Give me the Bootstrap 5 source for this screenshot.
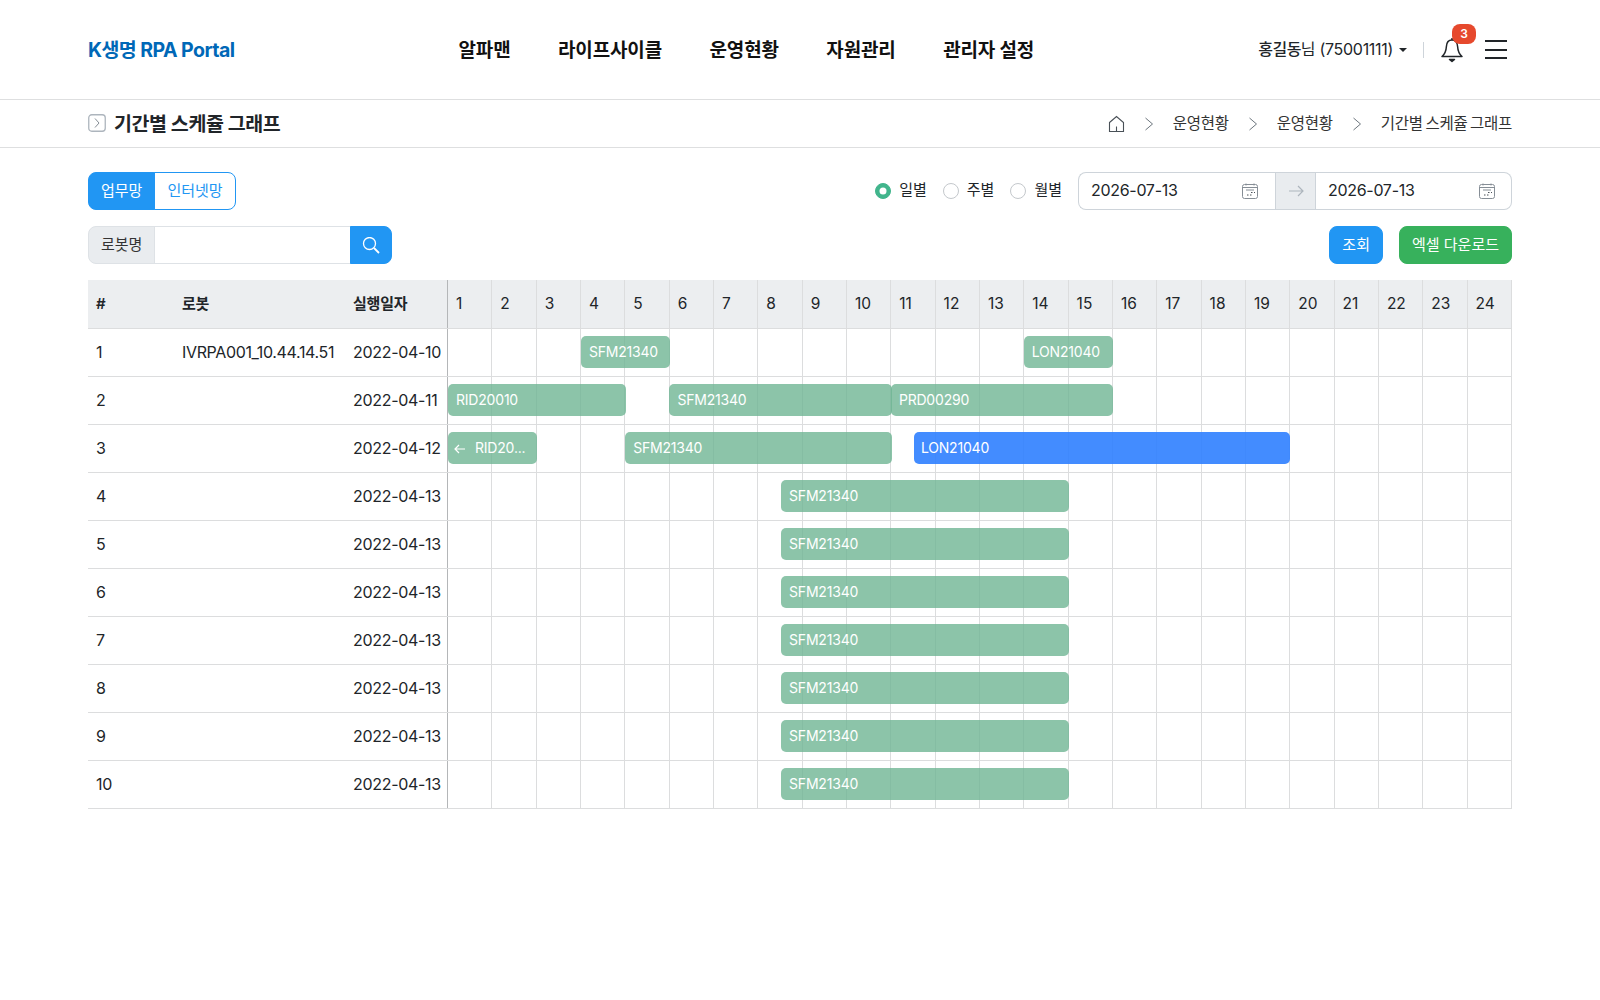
<!DOCTYPE html>
<html lang="ko">
<head>
  <meta charset="UTF-8" />
  <meta name="viewport" content="width=device-width, initial-scale=1.0"/>
  <title>기간별 스케쥴 그래프</title>
  <link href="https://cdn.jsdelivr.net/npm/bootstrap@5.3.2/dist/css/bootstrap.min.css" rel="stylesheet" />
  <style>
    body {
      font-family: Inter, "Noto Sans CJK KR", sans-serif;
      font-size: 15px;
      color: #212529;
      background: #fff;
    }
    .wrap { padding: 0 88px; }
    .top-bar { height: 100px; border-bottom: 1px solid #dedfe0; }
    .brand-name { color: #0068b7; font-size: 19.5px; font-weight: 700; letter-spacing: -.55px; margin-top: 3px; }
    .main-menu { gap: 47.5px; margin-top: 3px; }
    .main-menu a { color: #111; font-size: 19px; font-weight: 700; letter-spacing: -.15px; text-decoration: none; }
    .user-name { font-size: 16px; letter-spacing: -.3px; margin-top: -1px; }
    .user-name b { font-weight: 500; letter-spacing: -.5px; }
    .user-name::after { content: ""; display: inline-block; margin-left: 6px; vertical-align: 3px; border-top: 4px solid #212529; border-left: 4px solid transparent; border-right: 4px solid transparent; }
    .bar-sep { width: 1px; height: 16px; background: #ced4da; margin: 0 16px; }
    .bell-box { width: 24px; height: 26px; position: relative; margin-right: 21px; }
    .bell-count { position: absolute; left: 12px; top: -13px; width: 24px; height: 20px; border-radius: 8px; background: #e6492d; color: #fff; font-size: 12px; font-weight: 600; text-align: center; line-height: 20px; }
    .burger { width: 22px; height: 19px; margin-right: 5px; display: flex; flex-direction: column; justify-content: space-between; }
    .burger span { height: 2px; background: #212529; }
    .sub-bar { height: 48px; border-bottom: 1px solid #dedfe0; }
    .page-title { font-size: 19.5px; font-weight: 700; letter-spacing: -.4px; margin: 2px 0 0; color: #212529; }
    .crumb-line { font-size: 15.5px; letter-spacing: -.26px; word-spacing: -1.5px; color: #333; gap: 19px; }
    .tool-row { margin-top: 24px; }
    .tool-row + .tool-row { margin-top: 16px; }
    .btn-blue { background: #2196f3; border-color: #2196f3; color: #fff; }
    .btn-green { background: #37b15c; border-color: #37b15c; color: #fff; }
    .tool-row .btn, .tool-row .form-control, .tool-row .input-group-text {
      font-size: 15px; height: 38px; border-radius: 8px;
    }
    .tab-pick .btn { padding: 0 12px; border-color: #2196f3; color: #2196f3; background: #fff; line-height: 36px; }
    .tab-pick .btn.active { background: #2196f3; color: #fff; }
    .name-search { width: 304px; }
    .name-search .input-group-text { background: #e9ecef; color: #333; padding: 0 12px; letter-spacing: -.1px; }
    .name-search .btn { width: 42px; padding: 0; }
    .period-pick { gap: 16px; margin-right: 16px; }
    .period-pick .form-check { margin: 0; padding: 0; display: flex; align-items: center; gap: 8px; min-height: 0; }
    .period-pick .form-check-input { float: none; margin: 0; width: 16px; height: 16px; border-color: #c4c8cc; }
    .period-pick .form-check-input:checked { background-color: #41b58c; border-color: #41b58c; }
    .period-pick label { margin-top: -2px; }
    .range-pick { width: 434px; }
    .range-pick .date-cell { flex: 1; height: 38px; border: 1px solid #ced4da; padding: 0 17px 0 12px; display: flex; align-items: center; justify-content: space-between; font-size: 16px; letter-spacing: -.3px; }
    .range-pick .date-cell span { margin-top: -2px; }
    .range-pick .date-cell:first-child { border-radius: 8px 0 0 8px; border-right: 0; }
    .range-pick .date-cell:last-child { border-radius: 0 8px 8px 0; border-left: 0; padding-right: 16px; }
    .range-pick .arrow-cell { width: 41px; height: 38px; background: #e9ecef; border: 1px solid #ced4da; display: flex; align-items: center; justify-content: center; }
    .act-btn { padding: 0 12px; }
    .sched { margin: 16px 0 0; table-layout: fixed; width: 100%; font-size: 16px; border-color: #dcddde; }
    .sched th, .sched td { height: 48px; padding: 0 8px; vertical-align: middle; box-shadow: none; white-space: nowrap; letter-spacing: -.3px; }
    .sched thead th { background: #eceef0; }
    .sched .head-label { font-weight: 600; font-size: 15px; letter-spacing: -.2px; }
    .sched .hour { font-weight: 400; font-size: 15.5px; letter-spacing: 0; border-left: 1px solid #dcddde; padding: 0 0 0 8px; }
    .sched .hour-first { border-left: 1px solid #b4b6b8; }
    .sched .hour:last-child { border-right: 1px solid #dcddde; }
    .sched .robot-cell { letter-spacing: -.35px; }
    .sched .time-cell { padding: 0; border-left: 1px solid #b4b6b8; border-right: 1px solid #dcddde; }
    .time-row { display: flex; height: 47px; position: relative; }
    .time-row i { flex: 1; border-left: 1px solid #dcddde; }
    .time-row i:first-child { border-left: 0; }
    .job-bar { position: absolute; top: 7px; height: 32px; border-radius: 5px; color: #fff; font-size: 14px; letter-spacing: -.2px; padding-left: 8px; line-height: 32px; background: rgba(111, 181, 147, .8); overflow: hidden; }
    .job-bar.is-running { background: rgba(47, 127, 255, .9); padding-left: 7px; }
    .job-bar.is-back { padding-left: 6px; }
    .job-bar svg { margin-right: 9px; vertical-align: -1px; }
  </style>
</head>
<body>
  <header class="top-bar wrap d-flex align-items-center justify-content-between">
    <a class="brand-name text-decoration-none" href="#">K생명 RPA Portal</a>
    <nav class="main-menu d-flex">
      <a href="#">알파맨</a>
      <a href="#">라이프사이클</a>
      <a href="#">운영현황</a>
      <a href="#">자원관리</a>
      <a href="#">관리자 설정</a>
    </nav>
    <div class="d-flex align-items-center">
      <span class="user-name"><b>홍길동</b>님 (75001111)</span>
      <span class="bar-sep"></span>
      <span class="bell-box">
        <svg width="24" height="26" viewBox="0 0 24 26" fill="none" stroke="#212529" stroke-width="1.5" stroke-linejoin="round"><path d="M12 3c-3.600 0-5.400 2.600-5.600 6.500-.3 5-1.800 7.800-4.400 10h20c-2.600-2.200-4.100-5-4.400-10C17.400 5.600 15.600 3 12 3z"/><path d="M12 1v2"/><path d="M9.500 22.500h5l-2.500 2z" fill="#212529"/></svg>
        <span class="bell-count">3</span>
      </span>
      <span class="burger"><span></span><span></span><span></span></span>
    </div>
  </header>

  <div class="sub-bar wrap d-flex align-items-center justify-content-between">
    <div class="d-flex align-items-center gap-2">
      <svg width="18" height="18" viewBox="0 0 18 18" fill="none"><rect x=".75" y=".75" width="16.500" height="16.500" rx="3" stroke="#adb5bd" stroke-width="1.300"/><path d="M7 4.500 11 9l-4 4.500" stroke="#868e96" stroke-width="1"/></svg>
      <h1 class="page-title">기간별 스케쥴 그래프</h1>
    </div>
    <div class="crumb-line d-flex align-items-center">
      <svg width="17" height="18" viewBox="0 0 17 18" fill="none" stroke="#495057" stroke-width="1.100"><path d="M1.500 7.500 8.500 1.500l7 6V16.500h-14z"/><path d="M8.500 11.500v5"/></svg>
      <svg width="10" height="14" viewBox="0 0 10 14" fill="none" stroke="#6c757d"><path d="M1.500 1l7 6-7 6"/></svg>
      <span>운영현황</span>
      <svg width="10" height="14" viewBox="0 0 10 14" fill="none" stroke="#6c757d"><path d="M1.500 1l7 6-7 6"/></svg>
      <span>운영현황</span>
      <svg width="10" height="14" viewBox="0 0 10 14" fill="none" stroke="#6c757d"><path d="M1.500 1l7 6-7 6"/></svg>
      <span>기간별 스케쥴 그래프</span>
    </div>
  </div>

  <main class="wrap">
    <div class="tool-row d-flex align-items-center justify-content-between">
      <div class="btn-group tab-pick" role="group">
        <button type="button" class="btn active">업무망</button>
        <button type="button" class="btn">인터넷망</button>
      </div>
      <div class="d-flex align-items-center">
        <div class="period-pick d-flex align-items-center">
          <div class="form-check"><input class="form-check-input" type="radio" name="period" id="pd" checked><label for="pd">일별</label></div>
          <div class="form-check"><input class="form-check-input" type="radio" name="period" id="pw"><label for="pw">주별</label></div>
          <div class="form-check"><input class="form-check-input" type="radio" name="period" id="pm"><label for="pm">월별</label></div>
        </div>
        <div class="range-pick d-flex">
          <div class="date-cell"><span>2026-07-13</span>
            <svg width="16" height="16" viewBox="0 0 16 16" fill="none" stroke="#868e96"><rect x=".5" y="1.500" width="15" height="14" rx="2"/><path d="M1 4.500h14M4 .5v2M12 .5v2M4 7h8" /><path d="M9 9.500h1.500M12 9.500h1M5 12h1.500M8 12h1.500" stroke="#495057"/></svg>
          </div>
          <div class="arrow-cell"><svg width="16" height="12" viewBox="0 0 16 12" fill="none" stroke="#adb5bd" stroke-width="1.200"><path d="M1 6h14M10 1l5 5-5 5"/></svg></div>
          <div class="date-cell"><span>2026-07-13</span>
            <svg width="16" height="16" viewBox="0 0 16 16" fill="none" stroke="#868e96"><rect x=".5" y="1.500" width="15" height="14" rx="2"/><path d="M1 4.500h14M4 .5v2M12 .5v2M4 7h8" /><path d="M9 9.500h1.500M12 9.500h1M5 12h1.500M8 12h1.500" stroke="#495057"/></svg>
          </div>
        </div>
      </div>
    </div>

    <div class="tool-row d-flex align-items-center justify-content-between">
      <div class="input-group name-search">
        <span class="input-group-text">로봇명</span>
        <input type="text" class="form-control" aria-label="로봇명">
        <button class="btn btn-blue" type="button" aria-label="검색">
          <svg width="18" height="18" viewBox="0 0 18 18" fill="none" stroke="#fff" stroke-width="1.300"><circle cx="7.500" cy="6.500" r="6"/><path d="M12 11l5 5" stroke-width="1.800"/></svg>
        </button>
      </div>
      <div class="d-flex gap-3">
        <button type="button" class="btn btn-blue act-btn">조회</button>
        <button type="button" class="btn btn-green act-btn">엑셀 다운로드</button>
      </div>
    </div>

    <table class="table sched">
      <colgroup>
        <col style="width:86px"><col style="width:171px"><col style="width:102.500px"><col span="24">
      </colgroup>
      <thead><tr id="headRow"></tr></thead>
      <tbody id="bodyRows"></tbody>
    </table>
  </main>

  <script>
    const arrowIcon = '<svg width="12" height="10" viewBox="0 0 12 10" fill="none" stroke="#fff" stroke-width="1.2"><path d="M11 5H1M5 1 1 5l4 4"/></svg>';
    const rows = [
      { date: "2022-04-10", robot: "IVRPA001_10.44.14.51", jobs: [[3, 5, "SFM21340"], [13, 15, "LON21040"]] },
      { date: "2022-04-11", jobs: [[0, 4, "RID20010"], [5, 10, "SFM21340"], [10, 15, "PRD00290"]] },
      { date: "2022-04-12", jobs: [[0, 2, "RID20...", "back"], [4, 10, "SFM21340"], [10.52, 19, "LON21040", "run"]] }
    ];
    for (let i = 0; i < 7; i++) {
      rows.push({ date: "2022-04-13", jobs: [[7.52, 14, "SFM21340"]] });
    }

    let head = '<th class="head-label">#</th><th class="head-label">로봇</th><th class="head-label">실행일자</th>';
    for (let h = 1; h <= 24; h++) {
      head += `<th class="hour${h === 1 ? " hour-first" : ""}">${h}</th>`;
    }
    document.getElementById("headRow").innerHTML = head;

    const cells = "<i></i>".repeat(24);
    document.getElementById("bodyRows").innerHTML = rows.map((row, idx) => {
      const bars = row.jobs.map(([from, to, name, kind]) => {
        const left = from / 24 * 100;
        const width = (to - from) / 24 * 100;
        const cls = kind === "run" ? "job-bar is-running" : kind === "back" ? "job-bar is-back" : "job-bar";
        const icon = kind === "back" ? arrowIcon : "";
        return `<div class="${cls}" style="left:${left}%;width:calc(${width}% + .6px)">${icon}${name}</div>`;
      }).join("");
      return `<tr><td>${idx + 1}</td><td class="robot-cell">${row.robot || ""}</td><td>${row.date}</td>` +
        `<td class="time-cell" colspan="24"><div class="time-row">${cells}${bars}</div></td></tr>`;
    }).join("");
  </script>
  <script src="https://cdn.jsdelivr.net/npm/bootstrap@5.3.2/dist/js/bootstrap.bundle.min.js"></script>
</body>
</html>
